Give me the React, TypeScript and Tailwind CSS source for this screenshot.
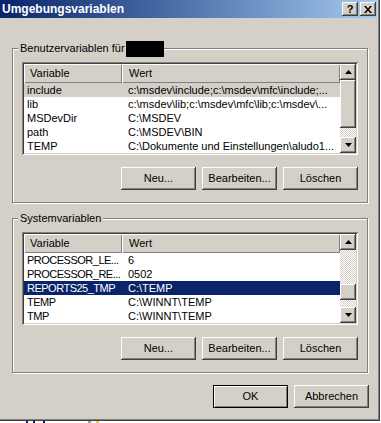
import React from 'react';

const face = "font-['Liberation_Sans',Arial,sans-serif]";
const raised =
  'shadow-[inset_-1px_-1px_0_#404040,inset_1px_1px_0_#fff,inset_-2px_-2px_0_#808080,inset_2px_2px_0_#d4d0c8]';
const checker = 'bg-[repeating-conic-gradient(#fff_0_25%,#d4d0c8_0_50%)] bg-[length:2px_2px]';

type Row = { name: string; value: string };

const userRows: Row[] = [
  { name: 'include', value: 'c:\\msdev\\include;c:\\msdev\\mfc\\include;...' },
  { name: 'lib', value: 'c:\\msdev\\lib;c:\\msdev\\mfc\\lib;c:\\msdev\\...' },
  { name: 'MSDevDir', value: 'C:\\MSDEV' },
  { name: 'path', value: 'C:\\MSDEV\\BIN' },
  { name: 'TEMP', value: 'C:\\Dokumente und Einstellungen\\aludo1...' },
];

const systemRows: Row[] = [
  { name: 'PROCESSOR_LE...', value: '6' },
  { name: 'PROCESSOR_RE...', value: '0502' },
  { name: 'REPORTS25_TMP', value: 'C:\\TEMP' },
  { name: 'TEMP', value: 'C:\\WINNT\\TEMP' },
  { name: 'TMP', value: 'C:\\WINNT\\TEMP' },
];

const Arrow = ({ down }: { down?: boolean }) => (
  <div className={`w-[16px] h-[16px] bg-[#d4d0c8] ${raised} flex items-center justify-center`}>
    <svg width="7" height="4" viewBox="0 0 7 4">
      {down ? <path d="M0 0h7L3.5 4z" fill="#000" /> : <path d="M0 4h7L3.5 0z" fill="#000" />}
    </svg>
  </div>
);

const ScrollBar = ({ before, thumb }: { before: number; thumb: number }) => (
  <div className="w-[16px] flex flex-col">
    <Arrow />
    <div className={checker} style={{ height: before }} />
    <div className={`bg-[#d4d0c8] ${raised}`} style={{ height: thumb }} />
    <div className={`flex-1 ${checker}`} />
    <Arrow down />
  </div>
);

interface ListProps {
  rows: Row[];
  selected: number;
  active: boolean;
  before: number;
  thumb: number;
  tight?: boolean;
}

const ListView: React.FC<ListProps> = ({ rows, selected, active, before, thumb, tight }) => (
  <div className="w-[336px] h-[93px] p-[2px] bg-white shadow-[inset_1px_1px_0_#808080,inset_-1px_-1px_0_#fff,inset_2px_2px_0_#404040,inset_-2px_-2px_0_#d4d0c8] flex">
    <div className="w-[316px] flex flex-col">
      <div className="flex h-[19px] leading-[19px]">
        <div className="w-[98px] pl-[6px] bg-[#d4d0c8] shadow-[inset_1px_1px_0_#fff,inset_-1px_-1px_0_#808080]">Variable</div>
        <div className="w-[218px] pl-[7px] bg-[#d4d0c8] shadow-[inset_1px_1px_0_#fff,inset_-1px_-1px_0_#808080]">Wert</div>
      </div>
      <div className="h-[70px] overflow-hidden">
        {rows.map((r, i) => {
          const sel = i === selected;
          const tone = sel ? (active ? 'bg-[#0a246a] text-white' : 'bg-[#d4d0c8]') : '';
          return (
            <div key={i} className={`flex h-[14px] leading-[14px] whitespace-nowrap ${tone}`}>
              <div className={`w-[98px] pl-[3px] overflow-hidden ${tight ? 'tracking-[-0.5px]' : ''}`}>{r.name}</div>
              <div className="w-[218px] pl-[6px] overflow-hidden">{r.value}</div>
            </div>
          );
        })}
      </div>
    </div>
    <ScrollBar before={before} thumb={thumb} />
  </div>
);

const Button = ({ children, isDefault }: { children: React.ReactNode; isDefault?: boolean }) =>
  isDefault ? (
    <div className="w-[75px] h-[23px] border border-black bg-[#d4d0c8] shadow-[inset_1px_1px_0_#fff,inset_-1px_-1px_0_#808080] flex items-center justify-center">
      {children}
    </div>
  ) : (
    <div className={`w-[75px] h-[23px] bg-[#d4d0c8] ${raised} flex items-center justify-center`}>{children}</div>
  );

const ButtonRow = () => (
  <div className="flex justify-end gap-[6px] mt-[12px]">
    <Button>Neu...</Button>
    <Button>Bearbeiten...</Button>
    <Button>Löschen</Button>
  </div>
);

const Group = ({ label, className, children }: { label: React.ReactNode; className?: string; children: React.ReactNode }) => (
  <div className={`w-[356px] h-[155px] border border-[#808080] shadow-[1px_1px_0_#fff,inset_1px_1px_0_#fff] px-[9px] flex flex-col ${className ?? ''}`}>
    <div className="-mt-[7px] -ml-[4px] self-start h-[13px] leading-[13px] pl-[2px] bg-[#d4d0c8] flex items-center">{label}</div>
    {children}
  </div>
);

export default function App() {
  return (
    <div className={`w-[381px] h-[423px] bg-white overflow-hidden text-[11px] text-black ${face}`}>
      <div className="w-[380px] h-[421px] bg-[#d4d0c8] shadow-[inset_-1px_-1px_0_#404040,inset_-2px_-2px_0_#808080] flex flex-col">
        <div className="w-[377px] h-[18px] bg-gradient-to-r from-[#0a246a] to-[#a6caf0] flex items-center justify-between pl-[2px] pr-[1px]">
          <span className="text-white font-bold text-[12px] leading-[18px]">Umgebungsvariablen</span>
          <div className="flex gap-[2px]">
            <div className={`w-[16px] h-[14px] bg-[#d4d0c8] ${raised} flex items-center justify-center font-bold text-[11px] leading-none`}>?</div>
            <div className={`w-[16px] h-[14px] bg-[#d4d0c8] ${raised} flex items-center justify-center`}>
              <svg width="8" height="7" viewBox="0 0 8 7">
                <path d="M0 0h2l2 2.5L6 0h2L5 3.5 8 7H6L4 4.5 2 7H0l3-3.5z" fill="#000" />
              </svg>
            </div>
          </div>
        </div>
        <div className="pl-[12px] pt-[30px] flex flex-col">
          <Group
            label={
              <>
                <span>Benutzervariablen für</span>
                <span className="ml-[1px] w-[38px] h-[16px] bg-black" />
              </>
            }
          >
            <div className="mt-[7px]">
              <ListView rows={userRows} selected={0} active={false} before={0} thumb={48} />
            </div>
            <ButtonRow />
          </Group>
          <Group className="mt-[15px]" label={<span className="pr-[2px]">Systemvariablen</span>}>
            <div className="mt-[7px]">
              <ListView rows={systemRows} selected={2} active before={34} thumb={16} tight />
            </div>
            <ButtonRow />
          </Group>
          <div className="w-[357px] flex justify-end gap-[6px] mt-[12px]">
            <Button isDefault>OK</Button>
            <Button>Abbrechen</Button>
          </div>
        </div>
      </div>
      {/* bits of the desktop showing below the window */}
      <div className="flex items-end h-[2px] pl-[26px] gap-[5px]">
        <span className="w-[2px] h-[2px] bg-[#0a246a]" />
        <span className="w-[2px] h-[2px] bg-[#0a246a]" />
        <span className="ml-[3px] w-[2px] h-[2px] bg-[#0a246a]" />
        <span className="ml-[38px] w-[3px] h-[2px] bg-[#a0a0a0]" />
        <span className="w-[3px] h-[2px] bg-[#e8d060]" />
      </div>
    </div>
  );
}
